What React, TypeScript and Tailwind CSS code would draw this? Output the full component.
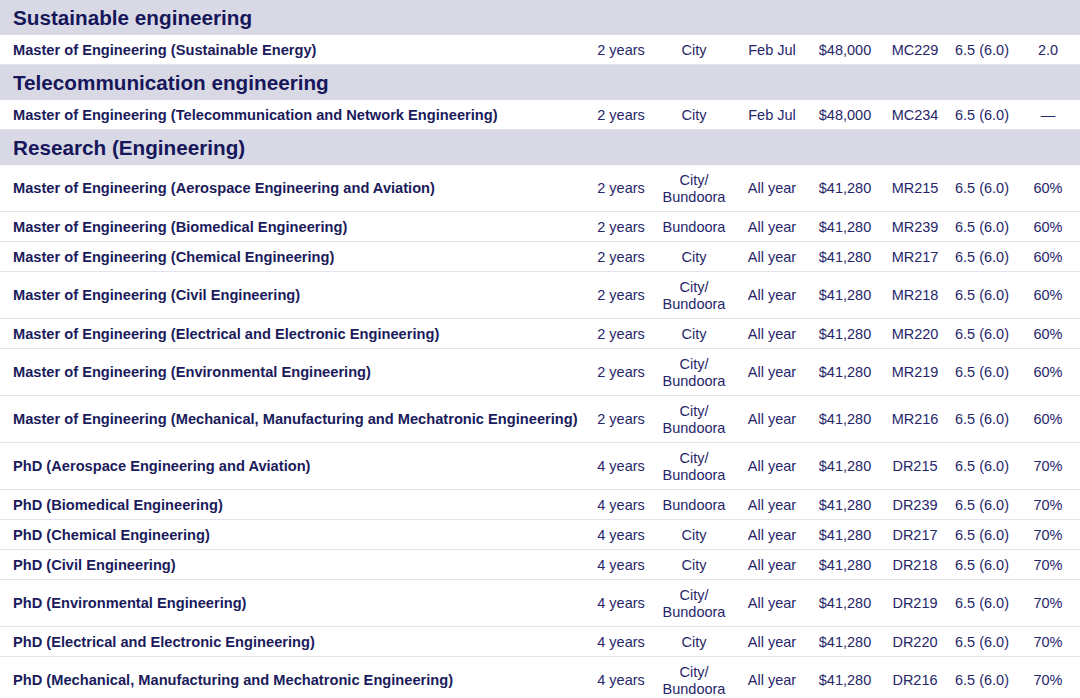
type Course = {
  name: string;
  duration: string;
  campus: string;
  intake: string;
  fee: string;
  code: string;
  ielts: string;
  last: string;
};

type Group = { heading: string; courses: Course[] };

const cityBundoora = "City/\nBundoora";

const master = (name: string, campus: string, code: string): Course => ({
  name: `Master of Engineering (${name})`,
  duration: "2 years",
  campus,
  intake: "All year",
  fee: "$41,280",
  code,
  ielts: "6.5 (6.0)",
  last: "60%",
});

const phd = (name: string, campus: string, code: string): Course => ({
  name: `PhD (${name})`,
  duration: "4 years",
  campus,
  intake: "All year",
  fee: "$41,280",
  code,
  ielts: "6.5 (6.0)",
  last: "70%",
});

const groups: Group[] = [
  {
    heading: "Sustainable engineering",
    courses: [
      {
        name: "Master of Engineering (Sustainable Energy)",
        duration: "2 years",
        campus: "City",
        intake: "Feb Jul",
        fee: "$48,000",
        code: "MC229",
        ielts: "6.5 (6.0)",
        last: "2.0",
      },
    ],
  },
  {
    heading: "Telecommunication engineering",
    courses: [
      {
        name: "Master of Engineering (Telecommunication and Network Engineering)",
        duration: "2 years",
        campus: "City",
        intake: "Feb Jul",
        fee: "$48,000",
        code: "MC234",
        ielts: "6.5 (6.0)",
        last: "—",
      },
    ],
  },
  {
    heading: "Research (Engineering)",
    courses: [
      master("Aerospace Engineering and Aviation", cityBundoora, "MR215"),
      master("Biomedical Engineering", "Bundoora", "MR239"),
      master("Chemical Engineering", "City", "MR217"),
      master("Civil Engineering", cityBundoora, "MR218"),
      master("Electrical and Electronic Engineering", "City", "MR220"),
      master("Environmental Engineering", cityBundoora, "MR219"),
      master("Mechanical, Manufacturing and Mechatronic Engineering", cityBundoora, "MR216"),
      phd("Aerospace Engineering and Aviation", cityBundoora, "DR215"),
      phd("Biomedical Engineering", "Bundoora", "DR239"),
      phd("Chemical Engineering", "City", "DR217"),
      phd("Civil Engineering", "City", "DR218"),
      phd("Environmental Engineering", cityBundoora, "DR219"),
      phd("Electrical and Electronic Engineering", "City", "DR220"),
      phd("Mechanical, Manufacturing and Mechatronic Engineering", cityBundoora, "DR216"),
    ],
  },
];

const rowGrid =
  "grid grid-cols-[590px_62px_84px_72px_74px_66px_68px_64px] items-center border-b border-[#e3e3ec] bg-white pt-[6.5px] pb-[5.5px] text-[14.5px] leading-[17px]";

function CourseRow({ course }: { course: Course }) {
  const cells = [course.duration, course.campus, course.intake, course.fee, course.code, course.ielts, course.last];
  return (
    <div className={rowGrid}>
      <div className="pl-[13px] text-[14.65px] font-bold text-[#1b1b5c]">{course.name}</div>
      {cells.map((value, i) => (
        <div key={i} className="whitespace-pre-line text-center text-[#26266a]">
          {value}
        </div>
      ))}
    </div>
  );
}

export default function App() {
  return (
    <div className="min-h-screen w-[1080px] bg-white font-['Liberation_Sans',Arial,sans-serif]">
      {groups.map((group) => (
        <section key={group.heading}>
          <h2 className="flex h-[35px] items-center bg-[#d9d9e5] pt-[1px] pl-[13px] text-[20.7px] font-bold text-[#16165a]">
            {group.heading}
          </h2>
          {group.courses.map((course) => (
            <CourseRow key={course.code} course={course} />
          ))}
        </section>
      ))}
    </div>
  );
}
